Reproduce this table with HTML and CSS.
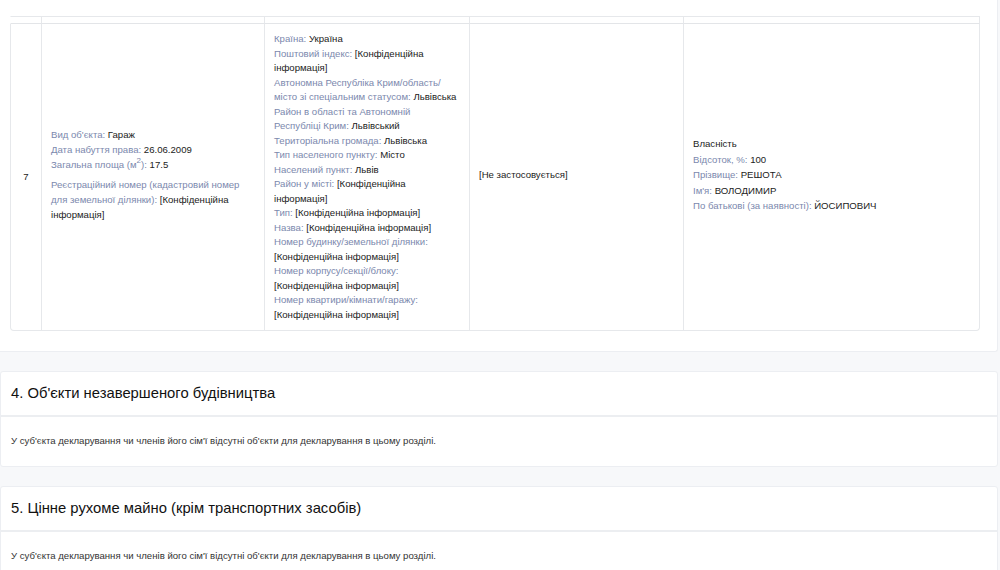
FILE: index.html
```html
<!DOCTYPE html>
<html lang="uk">
<head>
<meta charset="utf-8">
<link rel="stylesheet" href="styles.css">
</head>
<body>
<div class="page">
  <section class="card card-table">
    <table class="decl">
      <colgroup>
        <col class="w-num"><col class="w-obj"><col class="w-addr"><col class="w-na"><col class="w-own">
      </colgroup>
      <tr class="stub"><td></td><td></td><td></td><td></td><td></td></tr>
      <tr>
        <td class="c-num">7</td>
        <td class="c-obj">
          <div class="item"><span class="lbl">Вид об'єкта:</span> Гараж</div>
          <div class="item"><span class="lbl">Дата набуття права:</span> 26.06.2009</div>
          <div class="item"><span class="lbl">Загальна площа (м<sup>2</sup>):</span> 17.5</div>
          <div class="item reg"><span class="lbl">Реєстраційний номер (кадастровий номер для земельної ділянки):</span> [Конфіденційна інформація]</div>
        </td>
        <td class="c-addr">
          <div><span class="lbl">Країна:</span> Україна</div>
          <div><span class="lbl">Поштовий індекс:</span> [Конфіденційна інформація]</div>
          <div><span class="lbl">Автономна Республіка Крим/область/ місто зі спеціальним статусом:</span> Львівська</div>
          <div><span class="lbl">Район в області та Автономній Республіці Крим:</span> Львівський</div>
          <div><span class="lbl">Територіальна громада:</span> Львівська</div>
          <div><span class="lbl">Тип населеного пункту:</span> Місто</div>
          <div><span class="lbl">Населений пункт:</span> Львів</div>
          <div><span class="lbl">Район у місті:</span> [Конфіденційна інформація]</div>
          <div><span class="lbl">Тип:</span> [Конфіденційна інформація]</div>
          <div><span class="lbl">Назва:</span> [Конфіденційна інформація]</div>
          <div><span class="lbl">Номер будинку/земельної ділянки:</span> [Конфіденційна інформація]</div>
          <div><span class="lbl">Номер корпусу/секції/блоку:</span> [Конфіденційна інформація]</div>
          <div><span class="lbl">Номер квартири/кімнати/гаражу:</span> [Конфіденційна інформація]</div>
        </td>
        <td class="c-na">[Не застосовується]</td>
        <td class="c-own">
          <div class="own">Власність</div>
          <div class="own"><span class="lbl">Відсоток, %:</span> 100</div>
          <div class="own"><span class="lbl">Прізвище:</span> РЕШОТА</div>
          <div class="own"><span class="lbl">Ім'я:</span> ВОЛОДИМИР</div>
          <div class="own"><span class="lbl">По батькові (за наявності):</span> ЙОСИПОВИЧ</div>
        </td>
      </tr>
    </table>
  </section>

  <section class="card">
    <h2 class="card-head">4. Об'єкти незавершеного будівництва</h2>
    <div class="card-body">У суб'єкта декларування чи членів його сім'ї відсутні об'єкти для декларування в цьому розділі.</div>
  </section>

  <section class="card">
    <h2 class="card-head">5. Цінне рухоме майно (крім транспортних засобів)</h2>
    <div class="card-body">У суб'єкта декларування чи членів його сім'ї відсутні об'єкти для декларування в цьому розділі.</div>
  </section>
</div>
</body>
</html>
```

FILE: styles.css
```css
html, body {
  margin: 0;
  padding: 0;
}
body {
  background: #f7f8fa;
  font-family: "Liberation Sans", Arial, sans-serif;
  color: #222;
  overflow: hidden;
}
.page {
  width: 998px;
  display: flex;
  flex-direction: column;
  gap: 19px;
}
.card {
  background: #fff;
  border: 1px solid #eceef2;
  border-radius: 3px;
}
.card-table {
  border-top: none;
  border-left: none;
  border-radius: 0 0 3px 0;
  padding: 16px 17px 20px 10px;
}
.decl {
  width: 970px;
  border-collapse: separate;
  border-spacing: 0;
  font-size: 9.6px;
  line-height: 14.5px;
  table-layout: fixed;
}
.w-num { width: 32px; }
.w-obj { width: 223px; }
.w-addr { width: 205px; }
.w-na { width: 214px; }
.w-own { width: 296px; }
.decl td {
  border-right: 1px solid #e6e8eb;
  border-bottom: 1px solid #e6e8eb;
  padding: 8px 9px;
  vertical-align: middle;
}
.decl td.c-addr { padding-right: 12px; }
.decl td.c-obj { padding-bottom: 14px; }
.decl td.c-own { padding-bottom: 12px; }
.decl td.c-na { padding-bottom: 12px; }
.decl tr td:first-child { border-left: 1px solid #e6e8eb; }
.decl tr:last-child td:first-child { border-bottom-left-radius: 4px; }
.decl tr:last-child td:last-child { border-bottom-right-radius: 4px; }
.decl .stub td {
  height: 6px;
  padding: 0;
  border-top: 1px solid #e6e8eb;
  border-bottom: 1px solid #e3e5e8;
}
.decl .stub td:first-child { border-left-color: transparent; }
.c-num { text-align: center; }
.lbl { color: #7b88ad; }
.item { line-height: 15px; }
.item sup { font-size: 8px; line-height: 0; vertical-align: 5px; }
.item.reg { margin-top: 5px; }
.own { line-height: 15.5px; }
.card-head {
  margin: 0;
  height: 43px;
  line-height: 43px;
  padding: 0 10px;
  font-size: 14.8px;
  font-weight: normal;
  color: #111;
  border-bottom: 2px solid #eceef1;
}
.card-body {
  padding: 18px 10px 19px;
  font-size: 9.6px;
  line-height: 12px;
  color: #333;
}
```
